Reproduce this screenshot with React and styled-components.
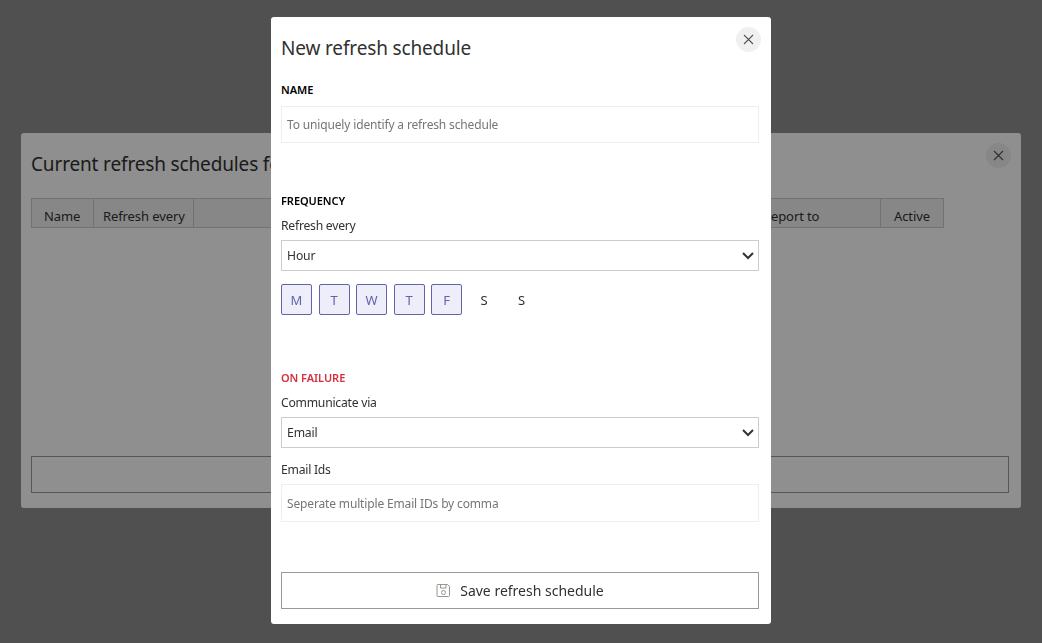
import React from 'react';
import styled, { createGlobalStyle } from 'styled-components';

const Global = createGlobalStyle`
  html, body { margin: 0; padding: 0; background: #fff; height: 100%; overflow: hidden; }
  body { font-family: "Noto Sans", "Open Sans", "Liberation Sans", sans-serif; color: #323130; }
  * { box-sizing: border-box; }
`;

const Overlay = styled.div`
  position: fixed;
  inset: 0;
  padding-bottom: 2px;
  background: rgba(0, 0, 0, 0.44);
  display: flex;
  align-items: center;
  justify-content: center;
  z-index: ${p => p.$z};
`;

const Dialog = styled.div`
  position: relative;
  width: ${p => p.$w}px;
  height: ${p => p.$h}px;
  background: #fff;
  border-radius: 3px;
  padding: 10px 12px 10px 10px;
  display: flex;
  flex-direction: column;
`;

const Title = styled.h2`
  margin: 8px 0 0;
  font-size: 19px;
  font-weight: 400;
  line-height: 26px;
  letter-spacing: -0.15px;
  white-space: nowrap;
`;

const Close = styled.button`
  position: absolute;
  top: 10px;
  right: 10px;
  width: 25px;
  height: 25px;
  padding: 0;
  border: none;
  border-radius: 50%;
  background: #f0f0f0;
  color: #555;
  display: flex;
  align-items: center;
  justify-content: center;
`;

const Table = styled.div`
  margin-top: 21px;
  display: grid;
  grid-template-columns: 61px 100px 560px 127px 63px;
  width: 913px;
  height: 30px;
  border: 1px solid #ccc;
  background: #f0f0f0;
`;

const Th = styled.div`
  font-size: 13px;
  line-height: 16px;
  padding: 9px 0 0 ${p => p.$pl || 9}px;
  border-left: ${p => (p.$first ? 'none' : '1px solid #ccc')};
  border-left-color: ${p => (p.$plain ? 'transparent' : '#ccc')};
  letter-spacing: -0.1px;
  white-space: nowrap;
`;

const AddButton = styled.div`
  margin-top: auto;
  height: 37px;
  margin-bottom: 5px;
  border: 1px solid #999;
`;

const SectionHead = styled.div`
  margin-top: ${p => p.$mt}px;
  font-size: 11px;
  line-height: 15px;
  font-weight: 600;
  letter-spacing: -0.05px;
  color: ${p => p.$color || '#000'};
  text-transform: uppercase;
`;

const Label = styled.label`
  display: block;
  margin-top: ${p => p.$mt}px;
  font-size: 12.2px;
  line-height: 17px;
  letter-spacing: -0.25px;
`;

const TextInput = styled.input`
  display: block;
  width: 100%;
  height: ${p => p.$h}px;
  margin-top: ${p => p.$mt}px;
  border: 1px solid #eee;
  background: #fff;
  padding: ${p => (p.$h > 37 ? '1px' : '0')} 5px 0;
  font: inherit;
  font-size: 12px;
  letter-spacing: -0.15px;
  outline: none;
  &::placeholder { color: #767676; opacity: 1; }
`;

const SelectWrap = styled.div`
  position: relative;
  margin-top: ${p => p.$mt}px;
`;

const Select = styled.select`
  display: block;
  width: 100%;
  height: 31px;
  border: 1px solid #ccc;
  background: #fff;
  padding: 0 5px;
  appearance: none;
  border-radius: 0;
  font: inherit;
  font-size: 12.2px;
  letter-spacing: -0.15px;
  color: #323130;
  outline: none;
`;

const Chevron = styled.svg`
  position: absolute;
  top: 11px;
  right: 5px;
  width: 12px;
  height: 9px;
  pointer-events: none;
`;

const Days = styled.div`
  display: flex;
  gap: 6.5px;
  margin-top: 13px;
  margin-bottom: 0.5px;
`;

const Day = styled.button`
  width: 31px;
  height: 31px;
  padding: 0;
  border-radius: 2px;
  border: 1px solid ${p => (p.$on ? '#6264a7' : 'transparent')};
  background: ${p => (p.$on ? '#eeeefb' : 'transparent')};
  color: ${p => (p.$on ? '#6264a7' : '#323130')};
  font: inherit;
  font-size: 13px;
`;

const SaveButton = styled.button`
  margin-top: auto;
  margin-bottom: 5px;
  height: 37px;
  width: 100%;
  background: #fff;
  border: 1px solid #999;
  border-radius: 0;
  font: inherit;
  font-size: 14px;
  color: #323130;
  display: flex;
  align-items: center;
  justify-content: center;
  gap: 9px;
`;

const X = () => (
  <svg width="11" height="11" viewBox="0 0 11 11" fill="none" stroke="currentColor" strokeWidth="1.1">
    <path d="M1 1l9 9M10 1l-9 9" />
  </svg>
);

const Down = () => (
  <Chevron viewBox="0 0 12 9" fill="none" stroke="#333" strokeWidth="2">
    <path d="M1 2l5 5 5-5" />
  </Chevron>
);

const SaveIcon = () => (
  <svg width="15" height="15" viewBox="0 0 15 15" fill="none" stroke="#9a948c" strokeWidth="1">
    <path d="M2 1.5h9.5l2 2v9a1 1 0 0 1-1 1H2a1 1 0 0 1-1-1v-10a1 1 0 0 1 1-1z" />
    <path d="M4.5 1.5v3.5h5.5V1.5" />
    <circle cx="7.5" cy="9.5" r="2" />
  </svg>
);

const days = [['M', 1], ['T', 1], ['W', 1], ['T', 1], ['F', 1], ['S', 0], ['S', 0]];

export default function App() {
  return (
    <>
      <Global />
      <Overlay $z={1}>
        <Dialog $w={1000} $h={375}>
          <Title>Current refresh schedules for this report</Title>
          <Close aria-label="Close"><X /></Close>
          <Table>
            <Th $first $pl={12}>Name</Th>
            <Th>Refresh every</Th>
            <Th />
            <Th $plain>Report to</Th>
            <Th $pl={13}>Active</Th>
          </Table>
          <AddButton />
        </Dialog>
      </Overlay>
      <Overlay $z={2}>
        <Dialog $w={500} $h={607}>
          <Title>New refresh schedule</Title>
          <Close aria-label="Close"><X /></Close>
          <SectionHead $mt={21}>Name</SectionHead>
          <TextInput $h={37} $mt={9} placeholder="To uniquely identify a refresh schedule" />
          <SectionHead $mt={50}>Frequency</SectionHead>
          <Label $mt={9}>Refresh every</Label>
          <SelectWrap $mt={6}>
            <Select defaultValue="Hour">
              <option>Hour</option>
              <option>Day</option>
              <option>Week</option>
            </Select>
            <Down />
          </SelectWrap>
          <Days>
            {days.map(([d, on], i) => <Day key={i} $on={!!on}>{d}</Day>)}
          </Days>
          <SectionHead $mt={54} $color="#d6303f">On failure</SectionHead>
          <Label $mt={9}>Communicate via</Label>
          <SelectWrap $mt={6}>
            <Select defaultValue="Email">
              <option>Email</option>
              <option>Teams</option>
            </Select>
            <Down />
          </SelectWrap>
          <Label $mt={13}>Email Ids</Label>
          <TextInput $h={38} $mt={6} placeholder="Seperate multiple Email IDs by comma" />
          <SaveButton><SaveIcon />Save refresh schedule</SaveButton>
        </Dialog>
      </Overlay>
    </>
  );
}
